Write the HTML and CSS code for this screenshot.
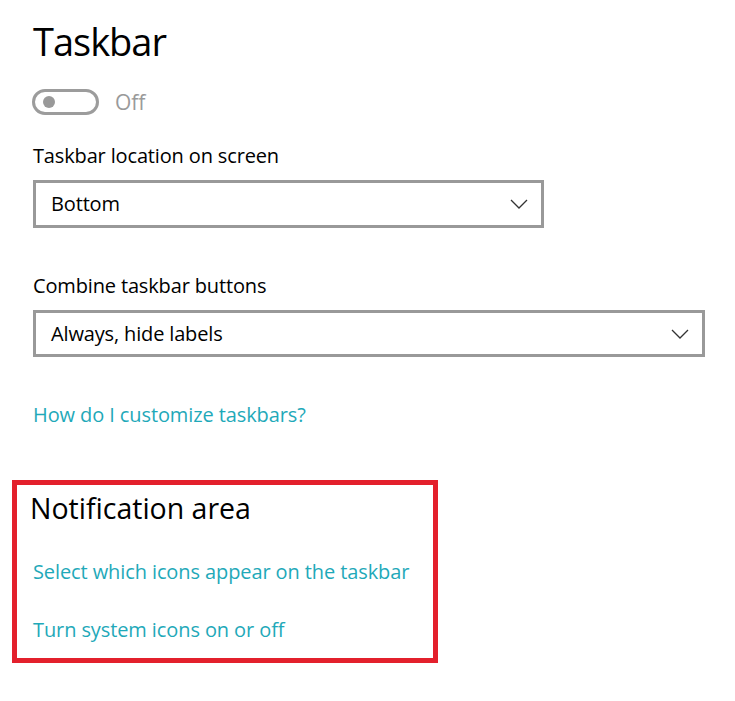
FILE: index.html
```html
<!DOCTYPE html>
<html lang="en">
<head>
<meta charset="utf-8">
<title>Taskbar</title>
<link rel="stylesheet" href="styles.css">
</head>
<body>
<div class="page">
  <h1 class="title">Taskbar</h1>
  <div class="toggle-row">
    <span class="toggle"><span class="knob"></span></span>
    <span class="toggle-text">Off</span>
  </div>

  <div class="label label-first">Taskbar location on screen</div>
  <div class="select select-short">
    <span class="select-value">Bottom</span>
    <svg class="chevron" width="18" height="10" viewBox="0 0 18 10"><polyline points="1,1 9,9 17,1" fill="none" stroke="#333" stroke-width="1.3"/></svg>
  </div>

  <div class="label label-second">Combine taskbar buttons</div>
  <div class="select select-long">
    <span class="select-value">Always, hide labels</span>
    <svg class="chevron" width="18" height="10" viewBox="0 0 18 10"><polyline points="1,1 9,9 17,1" fill="none" stroke="#333" stroke-width="1.3"/></svg>
  </div>

  <a class="link link-help" href="#">How do I customize taskbars?</a>

  <div class="notify-box">
    <h2 class="subtitle">Notification area</h2>
    <a class="link link-a" href="#">Select which icons appear on the taskbar</a>
    <a class="link link-b" href="#">Turn system icons on or off</a>
  </div>
</div>
</body>
</html>
```

FILE: styles.css
```css
* { box-sizing: border-box; }
html, body {
  margin: 0;
  background: #ffffff;
}
body {
  font-family: "Open Sans", "Noto Sans", sans-serif;
  color: #000;
}
.page {
  padding: 11px 0 0 33px;
}
.title {
  margin: 0;
  font-weight: 400;
  font-size: 38px;
  line-height: 60px;
  letter-spacing: -1px;
}
.toggle-row {
  margin-top: 18px;
  height: 26px;
  display: flex;
  align-items: center;
  gap: 16px;
}
.toggle {
  width: 67px;
  height: 26px;
  border: 3px solid #9c9c9c;
  border-radius: 13px;
  display: flex;
  align-items: center;
  padding-left: 8px;
  margin-left: -1px;
}
.knob {
  width: 12px;
  height: 12px;
  border-radius: 50%;
  background: #999;
}
.toggle-text {
  font-size: 21px;
  line-height: 26px;
  color: #9a9a9a;
}
.label {
  font-size: 20px;
  line-height: 30px;
  letter-spacing: -0.15px;
}
.label-first { margin-top: 26px; }
.label-second { margin-top: 43px; }
.select {
  height: 48px;
  border: 3px solid #999;
  display: flex;
  align-items: center;
  justify-content: space-between;
  padding: 0 13px 0 15px;
  margin-top: 9px;
}
.select-short { width: 511px; }
.select-long { width: 672px; height: 47px; }
.select-value {
  font-size: 20px;
  line-height: 30px;
  letter-spacing: -0.15px;
}
.chevron { display: block; }
.link {
  display: block;
  font-size: 20px;
  line-height: 30px;
  letter-spacing: -0.1px;
  color: #1fa9b9;
  text-decoration: none;
}
.link-help { margin-top: 43px; }
.notify-box {
  margin-top: 50px;
  margin-left: -21px;
  width: 426px;
  height: 183px;
  border: 5px solid #e3202c;
  padding: 3px 0 0 16px;
}
.subtitle {
  margin: 0 0 0 -3px;
  font-weight: 400;
  font-size: 28.5px;
  line-height: 40px;
}
.link-a { margin-top: 29px; }
.link-b { margin-top: 28px; }
```
